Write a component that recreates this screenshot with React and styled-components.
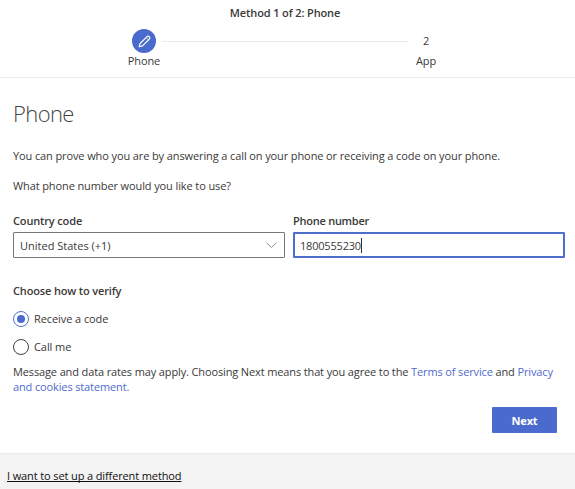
import React from 'react'
import styled, { createGlobalStyle } from 'styled-components'

const GlobalStyle = createGlobalStyle`
	* {
		box-sizing: border-box;
	}

	body {
		margin: 0;
		background: #fff;
		color: #3a3938;
		font-family: 'Open Sans', 'Noto Sans', sans-serif;
		font-size: 11px;
		line-height: 16px;
	}
`

const Page = styled.div`
	display: flex;
	flex-direction: column;
	height: 489px;
	overflow: hidden;
`

const Header = styled.header`
	height: 78px;
	padding-top: 5px;
	border-bottom: 1px solid #ededed;
`

const Title = styled.div`
	padding-right: 5px;
	text-align: center;
	font-weight: 600;
	letter-spacing: -0.13px;
`

const Steps = styled.div`
	display: flex;
	width: 336px;
	margin: 8px 0 0 117px;
`

const Step = styled.div`
	display: flex;
	flex-direction: column;
	align-items: center;
	width: 54px;
	flex: none;
	letter-spacing: -0.1px;
`

const StepIcon = styled.div`
	display: flex;
	align-items: center;
	justify-content: center;
	width: 24px;
	height: 24px;
	border-radius: 50%;
	background: ${props => (props.$active ? '#4a6bcd' : 'transparent')};
`

const StepLine = styled.div`
	flex: 1;
	height: 1px;
	margin: 12px -9px 0;
	background: #e9e9e9;
`

const Content = styled.main`
	height: 375px;
	padding: 20px 10px 0 13px;
`

const Heading = styled.h1`
	margin: 0 0 20px;
	font-size: 22px;
	font-weight: 300;
	line-height: 30px;
	letter-spacing: -0.6px;
	color: #444;
`

const Text = styled.p`
	margin: 0 0 ${props => props.$gap || '0'};
	letter-spacing: -0.11px;
	white-space: nowrap;
`

const Fields = styled.div`
	display: grid;
	grid-template-columns: 272px 272px;
	column-gap: 8px;
`

const Label = styled.div`
	height: ${props => props.$height || '19px'};
	font-weight: 600;
	letter-spacing: ${props => props.$spacing || '-0.15px'};
`

const Box = styled.div`
	display: flex;
	align-items: center;
	height: 26px;
	padding: ${props => (props.$focused ? '2px 5px 0' : '2px 7px 0 6px')};
	border: ${props => (props.$focused ? '2px solid #506dce' : '1px solid #777')};
	border-radius: 1px;
	letter-spacing: ${props => (props.$focused ? '-0.2px' : '0')};

	svg {
		margin: -2px 0 0 auto;
	}
`

const Caret = styled.span`
	width: 1px;
	height: 15px;
	margin-top: -1px;
	background: #333;
`

const Verify = styled.div`
	margin-top: 25px;
`

const Option = styled.div`
	display: flex;
	align-items: center;
	gap: 5px;
	height: 16px;
	margin-bottom: ${props => props.$gap};
	letter-spacing: -0.08px;
`

const Radio = styled.span`
	display: flex;
	align-items: center;
	justify-content: center;
	width: 16px;
	height: 16px;
	border: 1px solid ${props => (props.$checked ? '#5271cf' : '#444')};
	border-radius: 50%;

	&::after {
		content: '';
		width: 8px;
		height: 8px;
		border-radius: 50%;
		background: ${props => (props.$checked ? '#4a6bcd' : 'transparent')};
	}
`

const Terms = styled(Text)`
	line-height: 15px;
	letter-spacing: -0.13px;
`

const Link = styled.a`
	color: #4f6bce;
`

const Actions = styled.div`
	display: flex;
	justify-content: flex-end;
	margin: 13px 8px 0 0;
`

const Button = styled.button`
	width: 65px;
	height: 26px;
	padding: 0;
	border: 0;
	border-radius: 1px;
	background: #4a6bcd;
	color: #fff;
	font: 700 11px 'Open Sans', sans-serif;
	letter-spacing: -0.2px;
`

const Footer = styled.footer`
	flex: 1;
	padding: 14px 7px 0;
	border-top: 1px solid #ececec;
	background: #f3f3f3;
	color: #111;
	letter-spacing: -0.12px;
`

const OtherMethod = styled.a`
	text-decoration: underline;
	text-underline-offset: 1px;
	text-decoration-skip-ink: none;
`

function PencilIcon() {
	return (
		<svg width="13" height="13" viewBox="0 0 13 13" fill="none" stroke="#fff" strokeWidth="1.1" strokeLinejoin="round">
			<path d="M1.2 11.8 L2.1 8.5 L9 1.6 C10.3 .3 12.7 2.5 11.4 4 L4.5 10.9 Z" />
			<path d="M8.2 2.6 L10.4 4.8" strokeWidth=".8" />
		</svg>
	)
}

function ChevronIcon() {
	return (
		<svg width="11" height="7" viewBox="0 0 11 7" fill="none" stroke="#888" strokeWidth="1">
			<path d="M.7 .8 L5.5 5.6 L10.3 .8" />
		</svg>
	)
}

export default function App() {
	return (
		<>
			<GlobalStyle />
			<Page>
				<Header>
					<Title>Method 1 of 2: Phone</Title>
					<Steps>
						<Step>
							<StepIcon $active><PencilIcon /></StepIcon>
							Phone
						</Step>
						<StepLine />
						<Step>
							<StepIcon>2</StepIcon>
							App
						</Step>
					</Steps>
				</Header>

				<Content>
					<Heading>Phone</Heading>
					<Text $gap="14px">You can prove who you are by answering a call on your phone or receiving a code on your phone.</Text>
					<Text $gap="19px">What phone number would you like to use?</Text>

					<Fields>
						<Label>Country code</Label>
						<Label $spacing="-0.25px">Phone number</Label>
						<Box>
							United States (+1)
							<ChevronIcon />
						</Box>
						<Box $focused>
							1800555230
							<Caret />
						</Box>
					</Fields>

					<Verify>
						<Label $height="28px">Choose how to verify</Label>
						<Option $gap="12px">
							<Radio $checked />
							Receive a code
						</Option>
						<Option $gap="9px">
							<Radio />
							Call me
						</Option>
					</Verify>

					<Terms>
						Message and data rates may apply. Choosing Next means that you agree to the <Link>Terms of service</Link> and <Link>Privacy<br />and cookies statement.</Link>
					</Terms>

					<Actions>
						<Button>Next</Button>
					</Actions>
				</Content>

				<Footer>
					<OtherMethod>I want to set up a different method</OtherMethod>
				</Footer>
			</Page>
		</>
	)
}
